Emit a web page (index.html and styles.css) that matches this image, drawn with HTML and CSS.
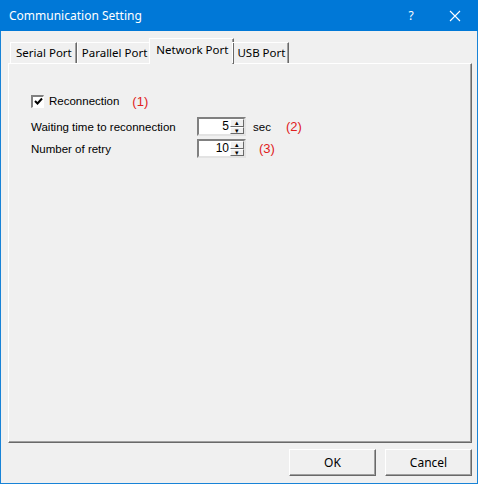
FILE: index.html
```html
<!DOCTYPE html>
<html lang="en">
<head>
    <meta charset="UTF-8">
    <title>Communication Setting</title>
    <link rel="stylesheet" href="styles.css">
</head>
<body>
    <div class="window">
        <div class="titlebar">
            <span class="title">Communication Setting</span>
            <span class="help">?</span>
            <span class="close">
                <svg width="12" height="12" viewBox="0 0 12 12"><path d="M1 1 L11 11 M11 1 L1 11" stroke="#fff" stroke-width="1.1" fill="none"/></svg>
            </span>
        </div>

        <div class="body">
            <div class="tabs">
                <div class="tab">Serial Port</div>
                <div class="tab">Parallel Port</div>
                <div class="tab active">Network Port</div>
                <div class="tab">USB Port</div>
            </div>

            <div class="panel">
                <div class="row check-row">
                    <span class="checkbox">
                        <svg width="9" height="9" viewBox="0 0 9 9"><path d="M1 4 L3.5 6.5 L8 1.5" stroke="#000" stroke-width="2" fill="none"/></svg>
                    </span>
                    <span class="label">Reconnection</span>
                    <span class="note note-1">(1)</span>
                </div>
                <div class="row field-row">
                    <span class="label field-label">Waiting time to reconnection</span>
                    <span class="spin">
                        <span class="spin-value">5</span>
                        <span class="spin-btns">
                            <span class="spin-btn">&#9652;</span>
                            <span class="spin-btn">&#9662;</span>
                        </span>
                    </span>
                    <span class="label unit">sec</span>
                    <span class="note note-2">(2)</span>
                </div>
                <div class="row field-row">
                    <span class="label field-label">Number of retry</span>
                    <span class="spin">
                        <span class="spin-value">10</span>
                        <span class="spin-btns">
                            <span class="spin-btn">&#9652;</span>
                            <span class="spin-btn">&#9662;</span>
                        </span>
                    </span>
                    <span class="note note-3">(3)</span>
                </div>
            </div>

            <div class="buttons">
                <button class="btn">OK</button>
                <button class="btn">Cancel</button>
            </div>
        </div>
    </div>
</body>
</html>
```

FILE: styles.css
```css
* {
    box-sizing: border-box;
}
body {
    margin: 0;
    padding: 0;
    background-color: #f0f0f0;
    font-family: "Noto Sans", "Open Sans", sans-serif;
}
.window {
    width: 478px;
    height: 484px;
    border: 1px solid #1883d7;
    border-top: none;
    display: flex;
    flex-direction: column;
    background-color: #f0f0f0;
}
.titlebar {
    height: 31px;
    flex-shrink: 0;
    background-color: #0078d7;
    color: white;
    display: flex;
    align-items: center;
    font-size: 12px;
    margin: 0 -1px;
}
.title {
    margin-left: 9px;
    flex: 1;
}
.help {
    width: 20px;
    margin-right: 28px;
    text-align: center;
}
.close {
    width: 12px;
    margin-right: 17px;
    display: flex;
}
.body {
    flex: 1;
    display: flex;
    flex-direction: column;
    padding: 7px 5px 0 7px;
}
.tabs {
    display: flex;
    align-items: flex-end;
    height: 25px;
    flex-shrink: 0;
    padding-left: 2px;
    position: relative;
    z-index: 1;
}
.tab {
    height: 21px;
    padding: 0 3px 0 4px;
    border-top: 1px solid #fff;
    border-left: 1px solid #fff;
    border-right: 1px solid #696969;
    box-shadow: inset -1px 0 0 #a0a0a0;
    font-size: 11.5px;
    line-height: 20px;
    color: #000;
}
.tab:first-child {
    padding: 0 4px 0 5px;
}
.tab.active {
    height: 26px;
    margin: 0 -2px -1px -2px;
    padding: 0 5px 0 6px;
    line-height: 22px;
    background-color: #f0f0f0;
}
.panel {
    height: 380px;
    flex-shrink: 0;
    border-top: 1px solid #fff;
    border-left: 1px solid #fff;
    border-right: 1px solid #696969;
    border-bottom: 1px solid #696969;
    box-shadow: inset -1px -1px 0 #a0a0a0;
    padding: 30px 0 0 22px;
    font-family: "Liberation Sans", Arial, sans-serif;
    font-size: 11.5px;
    color: #000;
}
.row {
    display: flex;
    align-items: center;
}
.check-row {
    height: 14px;
    margin-bottom: 9px;
}
.checkbox {
    width: 13px;
    height: 13px;
    border-top: 2px solid #808080;
    border-left: 2px solid #808080;
    border-right: 1px solid #fff;
    border-bottom: 1px solid #fff;
    background-color: #fff;
    display: flex;
    align-items: center;
    justify-content: center;
    margin-right: 5px;
}
.field-row {
    height: 19px;
    margin-bottom: 3px;
}
.field-label {
    width: 166px;
}
.note {
    color: #e02020;
    font-size: 13px;
}
.note-1 {
    margin-left: 13px;
}
.note-2 {
    margin-left: 15px;
}
.note-3 {
    margin-left: 13px;
}
.unit {
    margin-left: 7px;
}
.spin {
    width: 49px;
    height: 19px;
    border-top: 2px solid #808080;
    border-left: 2px solid #808080;
    border-right: 2px solid #e3e3e3;
    border-bottom: 2px solid #e3e3e3;
    background-color: #fff;
    display: flex;
    font-size: 12px;
}
.spin-value {
    flex: 1;
    text-align: right;
    line-height: 15px;
    padding-right: 1px;
}
.spin-btns {
    width: 14px;
    display: flex;
    flex-direction: column;
}
.spin-btn {
    flex: 1;
    background-color: #f0f0f0;
    border-top: 1px solid #fff;
    border-left: 1px solid #fff;
    border-right: 1px solid #696969;
    border-bottom: 1px solid #696969;
    font-size: 7px;
    line-height: 5px;
    text-align: center;
    color: #000;
}
.buttons {
    display: flex;
    justify-content: flex-end;
    gap: 9px;
    padding-top: 6px;
}
.btn {
    width: 87px;
    height: 27px;
    background-color: #f0f0f0;
    border-top: 1px solid #fff;
    border-left: 1px solid #fff;
    border-right: 1px solid #696969;
    border-bottom: 1px solid #696969;
    box-shadow: inset -1px -1px 0 #a0a0a0;
    font-family: "Noto Sans", "Open Sans", sans-serif;
    font-size: 12px;
    color: #000;
    padding: 0;
}
```
